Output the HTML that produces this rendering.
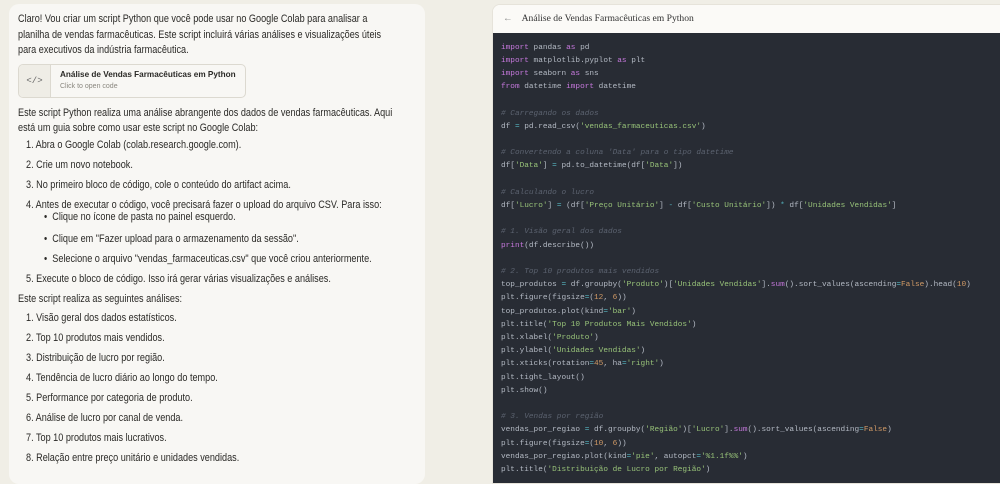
<!DOCTYPE html>
<html><head><meta charset="utf-8"><style>
*{margin:0;padding:0;box-sizing:border-box}
html,body{width:1000px;height:471px;overflow:hidden;background:#f0eee6;font-family:"Liberation Sans",sans-serif}
#left{position:absolute;left:9px;top:4px;width:416px;height:480px;background:#f8f7f4;border-radius:10px}
.t{position:absolute;font-size:10.6px;color:#2b2a27;white-space:nowrap;line-height:14px;transform:scaleX(0.86);transform-origin:0 0}
#card{position:absolute;left:18px;top:64px;width:228px;height:34px;border:1px solid #dcd9d0;border-radius:5px;background:#f8f7f4;overflow:hidden}
#card .ic{position:absolute;left:0;top:0;width:32px;height:32px;background:#efede6;border-right:1px solid #dcd9d0;font-family:"Liberation Mono",monospace;font-size:9px;color:#666;text-align:center;line-height:32px}
#card .a{position:absolute;left:41px;top:5px;font-size:8.2px;font-weight:bold;color:#2b2a27;white-space:nowrap}
#card .b{position:absolute;left:41px;top:18px;font-size:7px;color:#8a877f;white-space:nowrap}
#right{position:absolute;left:492px;top:4px;width:520px;height:480px;background:#fff;border-radius:8px 0 0 0;overflow:hidden;border:1px solid #e6e3da}
#hdr{position:absolute;left:0;top:0;width:100%;height:28px;background:#fbfaf7;font-family:"Liberation Serif",serif;font-size:9.6px;color:#333;line-height:28px;padding-left:10px}
#hdr span{color:#888;margin-right:9px}
#code{position:absolute;left:0;top:28px;width:100%;height:460px;background:#282c34;padding:8.5px 0 0 8px;font-family:"Liberation Mono",monospace;font-size:7.75px;line-height:13.2px;color:#b4bac4;white-space:pre}
.k{color:#c678dd}.s{color:#98c379}.n{color:#d19a66}.c{color:#5c6370;font-style:italic}.o{color:#56b6c2}
</style></head><body>
<div id="left"></div>
<div class="t" style="left:18px;top:12px">Claro! Vou criar um script Python que você pode usar no Google Colab para analisar a</div>
<div class="t" style="left:18px;top:28px">planilha de vendas farmacêuticas. Este script incluirá várias análises e visualizações úteis</div>
<div class="t" style="left:18px;top:43px">para executivos da indústria farmacêutica.</div>
<div id="card"><div class="ic">&lt;/&gt;</div><div class="a">Análise de Vendas Farmacêuticas em Python</div><div class="b">Click to open code</div></div>
<div class="t" style="left:18px;top:106px">Este script Python realiza uma análise abrangente dos dados de vendas farmacêuticas. Aqui</div>
<div class="t" style="left:18px;top:121px">está um guia sobre como usar este script no Google Colab:</div>
<div class="t" style="left:26px;top:138px">1. Abra o Google Colab (colab.research.google.com).</div>
<div class="t" style="left:26px;top:158px">2. Crie um novo notebook.</div>
<div class="t" style="left:26px;top:178px">3. No primeiro bloco de código, cole o conteúdo do artifact acima.</div>
<div class="t" style="left:26px;top:198px">4. Antes de executar o código, você precisará fazer o upload do arquivo CSV. Para isso:</div>
<div class="t" style="left:44px;top:210px">•&nbsp; Clique no ícone de pasta no painel esquerdo.</div>
<div class="t" style="left:44px;top:232px">•&nbsp; Clique em "Fazer upload para o armazenamento da sessão".</div>
<div class="t" style="left:44px;top:252px">•&nbsp; Selecione o arquivo "vendas_farmaceuticas.csv" que você criou anteriormente.</div>
<div class="t" style="left:26px;top:272px">5. Execute o bloco de código. Isso irá gerar várias visualizações e análises.</div>
<div class="t" style="left:18px;top:292px">Este script realiza as seguintes análises:</div>
<div class="t" style="left:26px;top:311px">1. Visão geral dos dados estatísticos.</div>
<div class="t" style="left:26px;top:331px">2. Top 10 produtos mais vendidos.</div>
<div class="t" style="left:26px;top:351px">3. Distribuição de lucro por região.</div>
<div class="t" style="left:26px;top:371px">4. Tendência de lucro diário ao longo do tempo.</div>
<div class="t" style="left:26px;top:391px">5. Performance por categoria de produto.</div>
<div class="t" style="left:26px;top:411px">6. Análise de lucro por canal de venda.</div>
<div class="t" style="left:26px;top:431px">7. Top 10 produtos mais lucrativos.</div>
<div class="t" style="left:26px;top:451px">8. Relação entre preço unitário e unidades vendidas.</div>
<div id="right">
<div id="hdr"><span>←</span>Análise de Vendas Farmacêuticas em Python</div>
<div id="code"><span class="k">import</span> pandas <span class="k">as</span> pd
<span class="k">import</span> matplotlib.pyplot <span class="k">as</span> plt
<span class="k">import</span> seaborn <span class="k">as</span> sns
<span class="k">from</span> datetime <span class="k">import</span> datetime

<span class="c"># Carregando os dados</span>
df <span class="o">=</span> pd.read_csv(<span class="s">'vendas_farmaceuticas.csv'</span>)

<span class="c"># Convertendo a coluna 'Data' para o tipo datetime</span>
df[<span class="s">'Data'</span>] <span class="o">=</span> pd.to_datetime(df[<span class="s">'Data'</span>])

<span class="c"># Calculando o lucro</span>
df[<span class="s">'Lucro'</span>] <span class="o">=</span> (df[<span class="s">'Preço Unitário'</span>] <span class="o">-</span> df[<span class="s">'Custo Unitário'</span>]) <span class="o">*</span> df[<span class="s">'Unidades Vendidas'</span>]

<span class="c"># 1. Visão geral dos dados</span>
<span class="k">print</span>(df.describe())

<span class="c"># 2. Top 10 produtos mais vendidos</span>
top_produtos <span class="o">=</span> df.groupby(<span class="s">'Produto'</span>)[<span class="s">'Unidades Vendidas'</span>].<span class="k">sum</span>().sort_values(ascending<span class="o">=</span><span class="n">False</span>).head(<span class="n">10</span>)
plt.figure(figsize<span class="o">=</span>(<span class="n">12</span>, <span class="n">6</span>))
top_produtos.plot(kind<span class="o">=</span><span class="s">'bar'</span>)
plt.title(<span class="s">'Top 10 Produtos Mais Vendidos'</span>)
plt.xlabel(<span class="s">'Produto'</span>)
plt.ylabel(<span class="s">'Unidades Vendidas'</span>)
plt.xticks(rotation<span class="o">=</span><span class="n">45</span>, ha<span class="o">=</span><span class="s">'right'</span>)
plt.tight_layout()
plt.show()

<span class="c"># 3. Vendas por região</span>
vendas_por_regiao <span class="o">=</span> df.groupby(<span class="s">'Região'</span>)[<span class="s">'Lucro'</span>].<span class="k">sum</span>().sort_values(ascending<span class="o">=</span><span class="n">False</span>)
plt.figure(figsize<span class="o">=</span>(<span class="n">10</span>, <span class="n">6</span>))
vendas_por_regiao.plot(kind<span class="o">=</span><span class="s">'pie'</span>, autopct<span class="o">=</span><span class="s">'%1.1f%%'</span>)
plt.title(<span class="s">'Distribuição de Lucro por Região'</span>)
</div>
</div>
</body></html>
